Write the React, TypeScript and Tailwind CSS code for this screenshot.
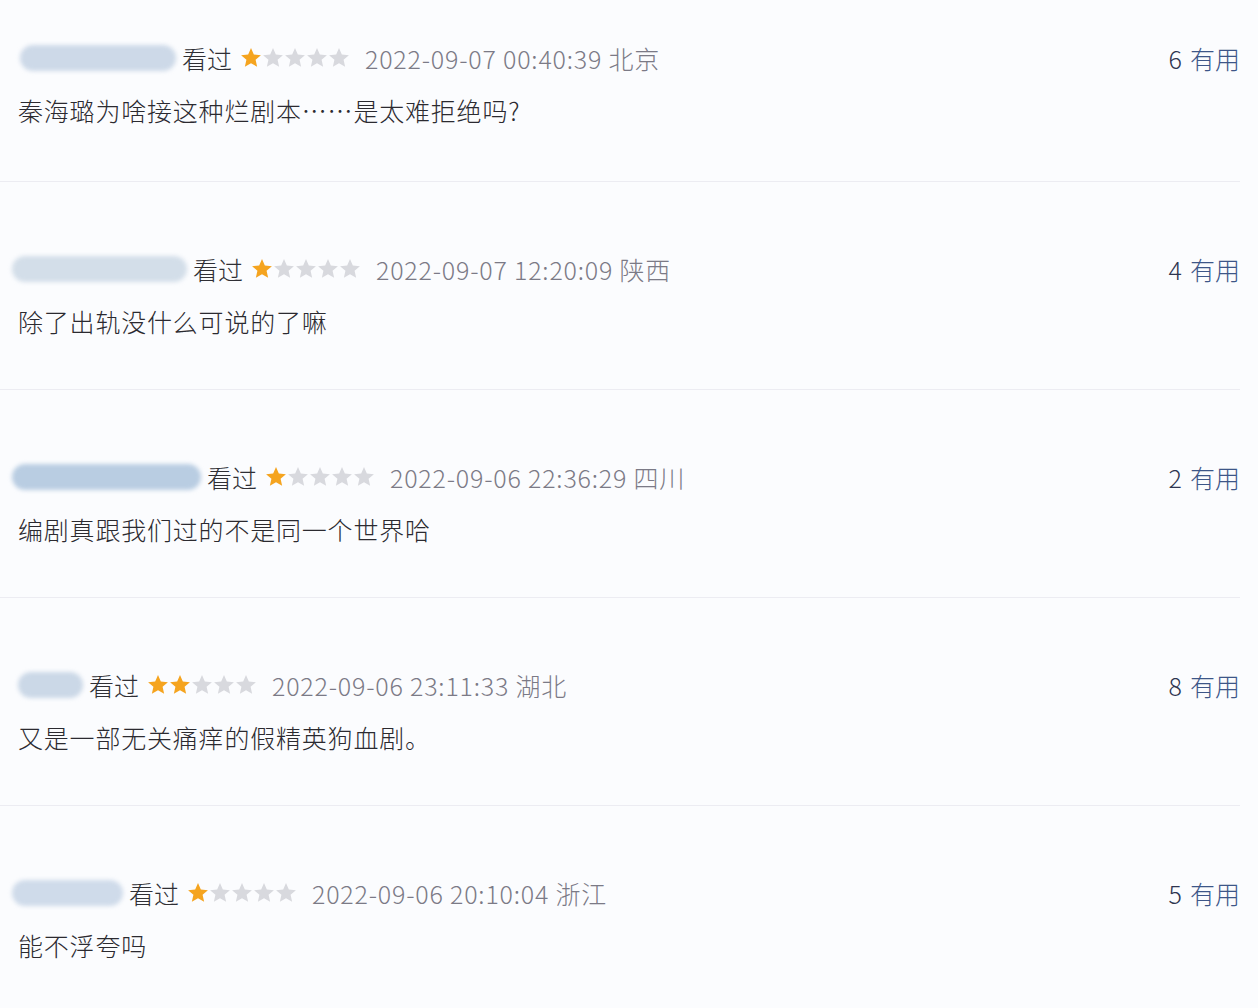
import React from "react";

type Review = {
  nameW: number;
  nameOffset: number;
  nameTone: string;
  stars: number;
  time: string;
  place: string;
  text: string;
  votes: number;
};

const REVIEWS: Review[] = [
  { nameW: 156, nameOffset: 20, nameTone: "bg-[#cdd9e8]", stars: 1, time: "2022-09-07 00:40:39", place: "北京", text: "秦海璐为啥接这种烂剧本……是太难拒绝吗?", votes: 6 },
  { nameW: 175, nameOffset: 12, nameTone: "bg-[#d3dee9]", stars: 1, time: "2022-09-07 12:20:09", place: "陕西", text: "除了出轨没什么可说的了嘛", votes: 4 },
  { nameW: 189, nameOffset: 12, nameTone: "bg-[#b9cde2]", stars: 1, time: "2022-09-06 22:36:29", place: "四川", text: "编剧真跟我们过的不是同一个世界哈", votes: 2 },
  { nameW: 65, nameOffset: 18, nameTone: "bg-[#cbd8e7]", stars: 2, time: "2022-09-06 23:11:33", place: "湖北", text: "又是一部无关痛痒的假精英狗血剧。", votes: 8 },
  { nameW: 111, nameOffset: 12, nameTone: "bg-[#cfdbea]", stars: 1, time: "2022-09-06 20:10:04", place: "浙江", text: "能不浮夸吗", votes: 5 },
];

function Star({ on }: { on: boolean }) {
  return (
    <svg width="22" height="22" viewBox="0 0 24 24" className="shrink-0">
      <path
        d="M12 1.2l3.1 7 7.7.7-5.8 5.1 1.7 7.6L12 17.6l-6.7 4 1.7-7.6-5.8-5.1 7.7-.7z"
        fill={on ? "#f5a41f" : "#d8d9de"}
      />
    </svg>
  );
}

function Stars({ n }: { n: number }) {
  return (
    <div className="flex items-center">
      {[0, 1, 2, 3, 4].map((i) => (
        <Star key={i} on={i < n} />
      ))}
    </div>
  );
}

function ReviewRow({ r, first }: { r: Review; first: boolean }) {
  return (
    <div
      className={`border-b border-[#ececf2] mr-[18px] ${first ? "pt-[40px] pb-[53px]" : "pt-[69px] pb-[50px]"}`}
    >
      {/* header line */}
      <div className="flex items-center h-[36px] text-[25px] leading-[36px] font-light">
        <div className="flex items-center" style={{ paddingLeft: r.nameOffset }}>
          <div
            className={`h-[26px] rounded-full blur-[2px] ${r.nameTone}`}
            style={{ width: r.nameW }}
          />
        </div>
        <span className="ml-[6px] text-[#2f2f35]">看过</span>
        <div className="ml-[8px]">
          <Stars n={r.stars} />
        </div>
        <span className="ml-[15px] text-[#7b7a86] tracking-[0.8px]">
          {r.time} {r.place}
        </span>
        <div className="ml-auto">
          <span className="text-[#2e3550]">{r.votes}</span>
          <span className="ml-[8px] text-[#3d5688]">有用</span>
        </div>
      </div>
      {/* body */}
      <p className="mt-[16px] pl-[18px] h-[36px] text-[25px] leading-[36px] font-light tracking-[0.8px] text-[#2b2a30]">
        {r.text}
      </p>
    </div>
  );
}

export default function App() {
  return (
    <div
      className="w-[1258px] h-[1008px] overflow-hidden bg-[#fbfcfe]"
      style={{ fontFamily: '"Noto Sans CJK SC", "Noto Sans", sans-serif' }}
    >
      {REVIEWS.map((r, i) => (
        <ReviewRow key={i} r={r} first={i === 0} />
      ))}
    </div>
  );
}
